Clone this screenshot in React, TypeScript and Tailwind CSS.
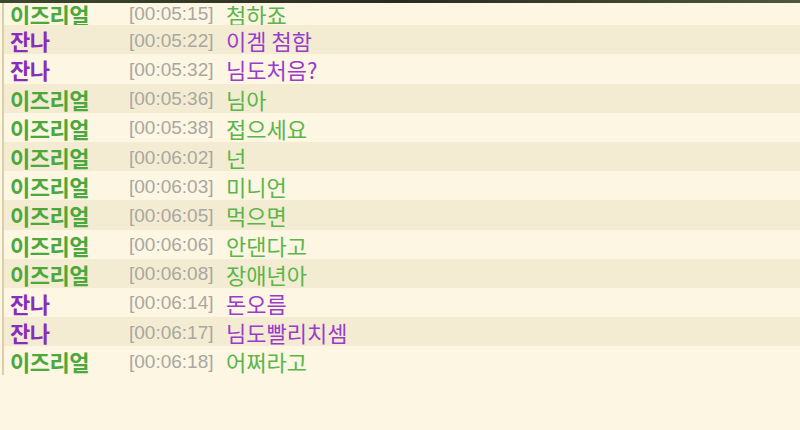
import React from "react";

type Row = { name: string; time: string; msg: string; who: "e" | "j" };

const rows: Row[] = [
  { name: "이즈리얼", time: "[00:05:15]", msg: "첨하죠", who: "e" },
  { name: "잔나", time: "[00:05:22]", msg: "이겜 첨함", who: "j" },
  { name: "잔나", time: "[00:05:32]", msg: "님도처음?", who: "j" },
  { name: "이즈리얼", time: "[00:05:36]", msg: "님아", who: "e" },
  { name: "이즈리얼", time: "[00:05:38]", msg: "접으세요", who: "e" },
  { name: "이즈리얼", time: "[00:06:02]", msg: "넌", who: "e" },
  { name: "이즈리얼", time: "[00:06:03]", msg: "미니언", who: "e" },
  { name: "이즈리얼", time: "[00:06:05]", msg: "먹으면", who: "e" },
  { name: "이즈리얼", time: "[00:06:06]", msg: "안댄다고", who: "e" },
  { name: "이즈리얼", time: "[00:06:08]", msg: "장애년아", who: "e" },
  { name: "잔나", time: "[00:06:14]", msg: "돈오름", who: "j" },
  { name: "잔나", time: "[00:06:17]", msg: "님도빨리치셈", who: "j" },
  { name: "이즈리얼", time: "[00:06:18]", msg: "어쩌라고", who: "e" },
];

export default function App() {
  return (
    <div className="w-[800px] h-[430px] overflow-hidden bg-[#fcf6e3] flex flex-col">
      <div className="h-[3px] shrink-0 relative z-10 bg-gradient-to-r from-[#3b4a2c] via-[#2c2a20] to-[#4a5a3a]" />
      <div className="-mt-[2px] flex flex-col">
        <div className="border-l-2 border-[#dccfa8] ml-[2px] flex flex-col">
          {rows.map((r, i) => (
            <div
              key={i}
              className={`${i === 0 ? "h-[24.2px]" : "h-[29.2px]"} flex items-center pt-[1px] ${
                i % 2 === 1 ? "bg-[#f3ecd2]" : "bg-[#fcf6e3]"
              }`}
            >
              <span
                className={`w-[125px] shrink-0 pl-[6px] font-bold text-[22px] leading-none tracking-[-0.5px] ${
                  r.who === "e" ? "text-[#4aa83c]" : "text-[#8a2cbc]"
                }`}
                style={{ fontFamily: '"Noto Sans CJK KR", "Noto Sans", sans-serif' }}
              >
                {r.name}
              </span>
              <span
                className="w-[97px] shrink-0 text-[19px] leading-none text-[#a9a7a0]"
                style={{ fontFamily: '"Liberation Sans", Arial, sans-serif' }}
              >
                {r.time}
              </span>
              <span
                className={`text-[22px] leading-none ${
                  r.who === "e" ? "text-[#5bb54a]" : "text-[#9a3ccb]"
                }`}
                style={{ fontFamily: '"Noto Sans CJK KR", "Noto Sans", sans-serif' }}
              >
                {r.msg}
              </span>
            </div>
          ))}
        </div>
      </div>
    </div>
  );
}
